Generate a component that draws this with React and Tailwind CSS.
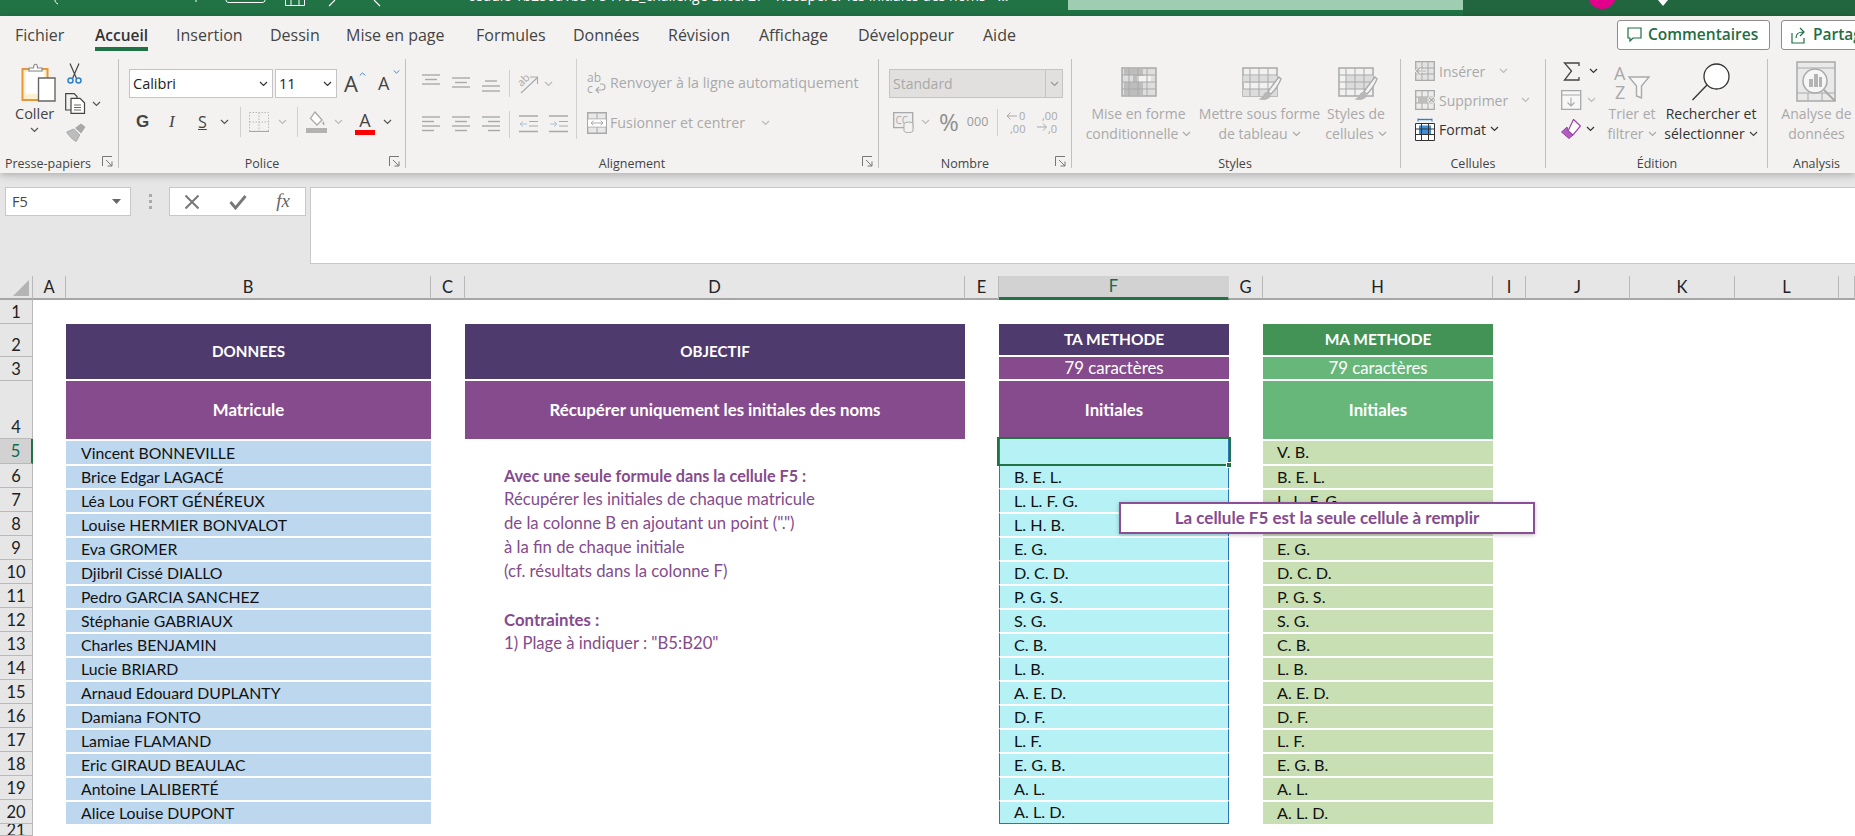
import React from 'react';

const TABS = [
  ['Fichier', 80], ['Accueil', 81], ['Insertion', 94], ['Dessin', 76], ['Mise en page', 130], ['Formules', 97],
  ['Données', 95], ['Révision', 91], ['Affichage', 99], ['Développeur', 125], ['Aide', 60],
];

const ROWS = [
  ['Vincent BONNEVILLE', '', 'V. B.', ''],
  ['Brice Edgar LAGACÉ', 'B. E. L.', 'B. E. L.', 'h'],
  ['Léa Lou FORT GÉNÉREUX', 'L. L. F. G.', 'L. L. F. G.', 'Récupérer les initiales de chaque matricule'],
  ['Louise HERMIER BONVALOT', 'L. H. B.', 'L. H. B.', 'de la colonne B en ajoutant un point (".")'],
  ['Eva GROMER', 'E. G.', 'E. G.', 'à la fin de chaque initiale'],
  ['Djibril Cissé DIALLO', 'D. C. D.', 'D. C. D.', '(cf. résultats dans la colonne F)'],
  ['Pedro GARCIA SANCHEZ', 'P. G. S.', 'P. G. S.', ''],
  ['Stéphanie GABRIAUX', 'S. G.', 'S. G.', 'c'],
  ['Charles BENJAMIN', 'C. B.', 'C. B.', '1) Plage à indiquer : "B5:B20"'],
  ['Lucie BRIARD', 'L. B.', 'L. B.', ''],
  ['Arnaud Edouard DUPLANTY', 'A. E. D.', 'A. E. D.', ''],
  ['Damiana FONTO', 'D. F.', 'D. F.', ''],
  ['Lamiae FLAMAND', 'L. F.', 'L. F.', ''],
  ['Eric GIRAUD BEAULAC', 'E. G. B.', 'E. G. B.', ''],
  ['Antoine LALIBERTÉ', 'A. L.', 'A. L.', ''],
  ['Alice Louise DUPONT', 'A. L. D.', 'A. L. D.', ''],
];

const COLS = [
  ['A', 'w'], ['B', 'w'], ['C', 'w'], ['D', 'w'], ['E', 'w'], ['F', 's'], ['G', 'w'], ['H', 'w'], ['I', 'w'], ['J', 'w'], ['K', 'w'], ['L', 'w'], ['', 'w'],
];

const GRAY = '#a9a9a9';

function Chev({ color = '#555', className = '' }) {
  return (
    <svg width="9" height="6" viewBox="0 0 9 6" className={className}>
      <path d="M1 1l3.5 3.5L8 1" fill="none" stroke={color} strokeWidth="1.2" />
    </svg>
  );
}

function Launcher() {
  return (
    <svg width="11" height="11" viewBox="0 0 11 11" className="absolute right-[5px] top-[1px]">
      <path d="M.5 10V.5H10M4 4l6 6M10 5.5V10H5.5" fill="none" stroke="#777" strokeWidth="1" />
    </svg>
  );
}

function Group({ w, label, launcher, children }) {
  return (
    <div className={`${w} h-[109px] shrink-0 flex flex-col border-r border-[#c2c0be]`}>
      <div className="h-[96px] flex">{children}</div>
      <div className="relative h-[13px] text-center text-[12.5px] leading-[18px] text-[#444]">
        {label}
        {launcher && <Launcher />}
      </div>
    </div>
  );
}

function Lines({ w = 18, h = 12, lines, color = GRAY }) {
  return (
    <svg width={w} height={h} viewBox={`0 0 ${w} ${h}`} className="shrink-0">
      {lines.map(([a, b, y], i) => <path key={i} d={`M${a} ${y}H${b}`} stroke={color} strokeWidth="1.4" />)}
    </svg>
  );
}

function PasteIcon() {
  return (
    <svg width="35" height="39" viewBox="0 0 35 39">
      <path d="M1.5 6h25v31h-25z" fill="#fdf0cf" stroke="#e79739" strokeWidth="2" />
      <path d="M5 9h18v22H5z" fill="#fff" />
      <path d="M8 8V5h4.5c0-5 4-5 4 0H21v3z" fill="#fff" stroke="#8a8a8a" strokeWidth="1.2" />
      <path d="M17.5 15h16.5v23H17.5z" fill="#fff" stroke="#666" strokeWidth="1.4" />
    </svg>
  );
}

function ScissorsIcon() {
  return (
    <svg width="15" height="21" viewBox="0 0 15 21">
      <path d="M3 .5l6.500 15M12 .5L5.500 15.500" stroke="#444" strokeWidth="1.2" fill="none" />
      <circle cx="3.5" cy="17.5" r="2.5" fill="none" stroke="#2f80c8" strokeWidth="1.5" />
      <circle cx="11.5" cy="17.5" r="2.5" fill="none" stroke="#2f80c8" strokeWidth="1.5" />
    </svg>
  );
}

function CopyIcon() {
  return (
    <svg width="21" height="21" viewBox="0 0 21 21">
      <path d="M6 17H.7V.7h8.5L12 3.5v1.8" fill="none" stroke="#444" strokeWidth="1.2" />
      <path d="M6 5.3h9l4.500 4.500v10.500H6z" fill="#fff" stroke="#444" strokeWidth="1.2" />
      <path d="M9 12h7M9 14.5h7M9 17h7" stroke="#666" strokeWidth="1" />
    </svg>
  );
}

function BrushIcon() {
  return (
    <svg width="21" height="19" viewBox="0 0 21 19">
      <path d="M.7 9l7-3 6 6-3.500 6.500C7 17 3 13 .7 9z" fill="#bdbdbd" stroke="#a8a8a8" />
      <path d="M9 5l6-4.500 4.500 3.500-4.500 6.500z" fill="#a8a8a8" />
    </svg>
  );
}

function BordersIcon() {
  return (
    <svg width="20" height="20" viewBox="0 0 20 20">
      <path d="M.5 .5h19v19H.5z" fill="none" stroke="#bbb" strokeDasharray="1.5 1.5" />
      <path d="M.5 10h19M10 .5v19" stroke="#bbb" strokeDasharray="1.5 1.5" />
      <path d="M0 19.5h20" stroke="#a8a8a8" strokeWidth="1.2" />
    </svg>
  );
}

function FillIcon() {
  return (
    <svg width="21" height="22" viewBox="0 0 21 22">
      <path d="M9 1l7 8-5 5-6.500-6.500z" fill="#fff" stroke="#a8a8a8" strokeWidth="1.3" />
      <path d="M17 10c1.500 2 2 3 1 4-1.200.6-2-1.500-1-4z" fill="#a8a8a8" />
      <path d="M0 17h21v5H0z" fill="#b4b2b0" />
    </svg>
  );
}

function WrapIcon() {
  return (
    <svg width="20" height="22" viewBox="0 0 20 22" className="shrink-0">
      <text x="0" y="10" fontSize="12" fill={GRAY} fontFamily="Open Sans, sans-serif">ab</text>
      <text x="0" y="21" fontSize="12" fill={GRAY} fontFamily="Open Sans, sans-serif">c</text>
      <path d="M9 18h6c4 0 4-6 0-6h-2M12 15l-3 3 3 3" fill="none" stroke={GRAY} strokeWidth="1.1" />
    </svg>
  );
}

function RotateIcon() {
  return (
    <svg width="21" height="21" viewBox="0 0 21 21">
      <g transform="rotate(-45 7 8)">
        <text x="0" y="10" fontSize="11" fill={GRAY} fontFamily="Open Sans, sans-serif">ab</text>
      </g>
      <path d="M3 20L19 5M12 4h7.500v7" fill="none" stroke={GRAY} strokeWidth="1.1" />
    </svg>
  );
}

function IndentIcon({ dir }) {
  return (
    <svg width="19" height="18" viewBox="0 0 19 18">
      <path d="M0 1h19M0 16.5h19" stroke={GRAY} strokeWidth="1.4" />
      <path d="M10 6.5h9M10 11h9" stroke={GRAY} strokeWidth="1.2" />
      {dir === 'l'
        ? <path d="M8 9H1M4 6.500L1 9l3 2.500" fill="none" stroke="#a8c4d8" strokeWidth="1" />
        : <path d="M1 9h7M5 6.500L8 9l-3 2.500" fill="none" stroke="#a8c4d8" strokeWidth="1" />}
    </svg>
  );
}

function MergeIcon() {
  return (
    <svg width="20" height="22" viewBox="0 0 20 22" className="shrink-0">
      <path d="M.7 .7h18.600v20.600H.7z" fill="#e8e8e8" stroke={GRAY} strokeWidth="1.4" />
      <path d="M1 7h18M1 15h18M10 1v6M10 15v6" stroke={GRAY} />
      <path d="M1 7.5h18v7H1z" fill="#fff" />
      <path d="M4 11h12M6.500 8.800L4 11l2.500 2.200M13.500 8.800L16 11l-2.500 2.200" fill="none" stroke={GRAY} />
    </svg>
  );
}

function AccountingIcon() {
  return (
    <svg width="21" height="21" viewBox="0 0 21 21">
      <path d="M.7 .7h19v15h-19z" fill="#eee" stroke={GRAY} strokeWidth="1.3" />
      <text x="2.5" y="12" fontSize="10" fill={GRAY} fontFamily="Open Sans, sans-serif">CC</text>
      <ellipse cx="15.5" cy="12" rx="4.5" ry="2" fill="#f3f2f1" stroke={GRAY} />
      <path d="M11 12v7c0 2 9 2 9 0v-7" fill="#f3f2f1" stroke={GRAY} />
    </svg>
  );
}

function DecimalIcon({ flip }) {
  const top = flip ? ',00' : '0';
  const bottom = flip ? ',0' : ',00';
  return (
    <svg width="21" height="25" viewBox="0 0 21 25" className="font-['Open_Sans',sans-serif]">
      <text x={flip ? 5 : 13} y="10" fontSize="11" fill={GRAY}>{top}</text>
      <text x={flip ? 11 : 4} y="23" fontSize="11" fill={GRAY}>{bottom}</text>
      {flip
        ? <path d="M0 17h9M6 13.500L9.500 17 6 20.500" fill="none" stroke={GRAY} />
        : <path d="M11 6H1M4.500 2.500L1 6l3.500 3.500" fill="none" stroke={GRAY} />}
    </svg>
  );
}

function TableIcon({ kind }) {
  return (
    <svg width="44" height="36" viewBox="0 0 44 36">
      <path d="M1 1h34v28H1z" fill={kind === 'cond' ? '#dedede' : '#f1f1f1'} stroke={GRAY} strokeWidth="1.5" />
      {kind === 'cond' && <path d="M3 2h19v6H3zM3 15h19v13H3zM12 8h11v7H12z" fill="#bdbdbd" />}
      {kind === 'cond' && <path d="M16 9h14v6H16z" fill="#f3f2f1" />}
      {kind === 'table' && <path d="M1 9h34v7H1zM1 22h34v7H1z" fill="#dcdcdc" />}
      {kind === 'style' && <path d="M8 8h27v14H8z" fill="#dcdcdc" />}
      <path d="M1 8h34M1 15h34M1 22h34M8 1v28M17 1v28M26 1v28" stroke={GRAY} strokeWidth="1" fill="none" />
      {kind !== 'cond' && <path d="M37 10c-4 5-8 10-11 15l3 2c4-4 8-10 10-15z" fill="#f3f2f1" stroke={GRAY} strokeWidth="1.3" />}
      {kind !== 'cond' && <path d="M25 25c-4 0-3 6-9 7 5 2 12 1 13-4z" fill="#b7b7b7" />}
    </svg>
  );
}

function InsertIcon() {
  return (
    <svg width="20" height="20" viewBox="0 0 20 20" className="shrink-0">
      <path d="M.7 .7h18.600v18.600H.7z" fill="#e3e3e3" stroke={GRAY} strokeWidth="1.3" />
      <path d="M1 7h18M1 13h18M7 1v18M13 1v18" stroke={GRAY} />
      <path d="M2 10h9M5 6.500L1.500 10 5 13.500" fill="none" stroke="#f3f2f1" strokeWidth="3" />
      <path d="M2 10h9M5 6.500L1.500 10 5 13.500" fill="none" stroke={GRAY} strokeWidth="1.1" />
    </svg>
  );
}

function DeleteIcon() {
  return (
    <svg width="21" height="20" viewBox="0 0 21 20" className="shrink-0">
      <path d="M.7 .7h18.600v18.600H.7z" fill="#ececec" stroke={GRAY} strokeWidth="1.3" />
      <path d="M1 7h18M1 13h18M7 1v18M13 1v18" stroke={GRAY} />
      <path d="M3 7h9v6H3z" fill="#bdbdbd" />
      <path d="M13.500 7l6 6M19.500 7l-6 6" stroke="#f3f2f1" strokeWidth="3" />
      <path d="M14 7.500l5 5M19 7.500l-5 5" stroke={GRAY} strokeWidth="1.2" />
    </svg>
  );
}

function FormatIcon() {
  return (
    <svg width="20" height="23" viewBox="0 0 20 23" className="shrink-0">
      <path d="M.5 5.5h19v17H.5z" fill="#fff" stroke="#333" />
      <path d="M4 7.5h12V16H4z" fill="#3d8fd8" />
      <path d="M.5 11h19M.5 16.5h19M6.5 5.5v17M13.5 5.5v17" stroke="#333" />
      <path d="M3 1.5h14" stroke="#2f80c8" strokeWidth="1.4" />
      <path d="M3 .5v3M17 .5v3" stroke="#2f80c8" />
    </svg>
  );
}

function SigmaIcon() {
  return (
    <svg width="17" height="19" viewBox="0 0 17 19">
      <path d="M16 4V1H1.500l7 8-7 9H16v-3" fill="none" stroke="#444" strokeWidth="1.3" />
    </svg>
  );
}

function FillDownIcon() {
  return (
    <svg width="21" height="20" viewBox="0 0 21 20">
      <path d="M.7 .7h19v18.600h-19z" fill="#f7f7f7" stroke={GRAY} strokeWidth="1.3" />
      <path d="M1 5h19" stroke={GRAY} />
      <path d="M10 7.500v8M6.500 12.500L10 16l3.500-3.500" fill="none" stroke={GRAY} strokeWidth="1.1" />
    </svg>
  );
}

function EraserIcon() {
  return (
    <svg width="20" height="20" viewBox="0 0 20 20">
      <path d="M12.500 .5L19.500 7l-7.500 9-5-4z" fill="#fff" stroke="#9b3fa8" strokeWidth="1.2" />
      <path d="M7 12l5 4-4 3.500L.5 13 6 8z" fill="#b05cc0" stroke="#9b3fa8" />
    </svg>
  );
}

function SortIcon() {
  return (
    <svg width="37" height="36" viewBox="0 0 37 36">
      <text x="0" y="15" fontSize="18" fill={GRAY} fontFamily="Open Sans, sans-serif">A</text>
      <text x="1" y="34" fontSize="18" fill={GRAY} fontFamily="Open Sans, sans-serif">Z</text>
      <path d="M15 12h20l-7.500 9v12l-5-2V21z" fill="#f7f7f7" stroke={GRAY} strokeWidth="1.4" />
    </svg>
  );
}

function SearchIcon() {
  return (
    <svg width="40" height="38" viewBox="0 0 40 38">
      <circle cx="25.5" cy="13.5" r="12.5" fill="#fff" stroke="#333" strokeWidth="1.3" />
      <path d="M16 22L1.500 37" stroke="#333" strokeWidth="1.3" />
    </svg>
  );
}

function AnalyseIcon() {
  return (
    <svg width="41" height="41" viewBox="0 0 41 41">
      <path d="M1 1h38v39H1z" fill="#e9e9e9" stroke={GRAY} strokeWidth="1.5" />
      <path d="M1 7h38M1 32h38M12 32v8M26 32v8" stroke={GRAY} />
      <circle cx="19" cy="20" r="12" fill="#f6f6f6" stroke={GRAY} strokeWidth="1.5" />
      <path d="M13 18h4v8h-4zM18 13h4v13h-4zM23 16h3v10h-3z" fill="#b3b3b3" />
      <path d="M28 29l11 11" stroke={GRAY} strokeWidth="1.8" />
    </svg>
  );
}

function TitleMarks() {
  return (
    <svg width="400" height="16" viewBox="0 0 400 16" className="shrink-0">
      <path d="M55 0c0 2 1 3 3 4M196 0v2" stroke="#fff" fill="none" />
      <path d="M226 0c0 1.500 1 2.500 3 2.500h33c2 0 3-1 3-2.500" stroke="#fff" fill="none" />
      <path d="M285.500 0v5.500h19V0M291 0v5M299 0v5" stroke="#fff" fill="none" />
      <path d="M335 0l-6 6M374 0l6 6" stroke="#fff" fill="none" strokeWidth="1.2" />
    </svg>
  );
}

function Big({ w, icon, lines, gray = true, chev }) {
  return (
    <div className={`${w} shrink-0 flex flex-col items-center`}>
      {icon}
      <div className={`text-center text-[14px] leading-[20px] whitespace-nowrap ${gray ? 'text-[#a9a9a9]' : 'text-[#333]'}`}>
        <div>{lines[0]}</div>
        <div className="flex items-center justify-center gap-[4px]">
          {lines[1]}
          {chev && <Chev color={gray ? GRAY : '#444'} />}
        </div>
      </div>
    </div>
  );
}

function Ribbon() {
  return (
    <div className="relative z-10 h-[157px] shrink-0 bg-[#f3f2f1] shadow-[0_2px_8px_rgba(0,0,0,0.25)]">
      {/* tabs */}
      <div className="h-[40px] flex items-start pl-[15px] pt-[8px] text-[16px] text-[#444]">
        {TABS.map(([t, w]) => (
          <div key={t} style={{ width: w }} className="shrink-0 leading-[22px]">
            <span className={t === 'Accueil' ? 'inline-block text-[15.5px] font-semibold text-[#333] border-b-[4px] border-[#1f7244] pb-[1px]' : ''}>{t}</span>
          </div>
        ))}
        <div className="ml-auto -mt-[4px] flex gap-[11px] -mr-[40px] text-[15.5px]">
          <div className="w-[153px] h-[30px] bg-white border border-[#8d8d8d] rounded-[3px] flex items-center gap-[6px] pl-[9px] text-[#1f6e43] font-semibold">
            <svg width="15" height="16" viewBox="0 0 15 16"><path d="M1 1h13v10H6l-3 3v-3H1z" fill="none" stroke="#1f6e43" strokeWidth="1.2" /></svg>
            Commentaires
          </div>
          <div className="w-[114px] h-[30px] bg-white border border-[#8d8d8d] rounded-[3px] flex items-center gap-[6px] pl-[9px] text-[#1f6e43] font-semibold overflow-hidden">
            <svg width="16" height="17" viewBox="0 0 16 17"><path d="M1 6v10h12v-5M5 11c0-4 3-6 7-6M9 1l4 4-4 4" fill="none" stroke="#1f6e43" strokeWidth="1.2" /></svg>
            Partager
          </div>
        </div>
      </div>

      {/* groups */}
      <div className="flex pt-[3px]">
        <Group w="w-[119px]" label={<span className="block pr-[22px]">Presse-papiers</span>} launcher>
          <div className="pl-[21px] pt-[4px] w-[65px] flex flex-col items-start">
            <PasteIcon />
            <div className="text-[14.5px] text-[#444] leading-[20px] mt-[2px] -ml-[6px]">Coller</div>
            <Chev className="mt-[3px] ml-[9px]" />
          </div>
          <div className="pt-[4px] flex flex-col items-start">
            <div className="ml-[2px]"><ScissorsIcon /></div>
            <div className="flex items-center gap-[6px] mt-[9px]"><CopyIcon /><Chev /></div>
            <div className="mt-[9px] ml-[1px]"><BrushIcon /></div>
          </div>
        </Group>

        <Group w="w-[287px]" label="Police" launcher>
          <div className="pl-[10px] pt-[10px]">
            <div className="flex items-center text-[14.5px] text-[#222]">
              <div className="w-[144px] h-[29px] bg-white border border-[#c4c4c4] flex items-center justify-between px-[3px] pr-[4px]">Calibri<Chev color="#333" /></div>
              <div className="ml-[2px] w-[62px] h-[29px] bg-white border border-[#c4c4c4] flex items-center justify-between px-[3px] pr-[4px]">11<Chev color="#333" /></div>
              <div className="ml-[7px] w-[20px] text-[22px] leading-[29px] text-[#444] relative">A<span className="absolute -right-[2px] top-[2px]"><Chev color="#2f80c8" className="rotate-180 w-[7px]" /></span></div>
              <div className="ml-[14px] w-[20px] text-[18px] leading-[29px] text-[#444] relative">A<span className="absolute -right-[2px] top-[0px]"><Chev color="#2f80c8" className="w-[7px]" /></span></div>
            </div>
            <div className="flex items-center h-[30px] mt-[9px] text-[#444]">
              <span className="ml-[7px] w-[12px] text-[17px] font-extrabold font-['Liberation_Sans',sans-serif]">G</span>
              <span className="ml-[21px] w-[10px] text-[17px] italic font-['Liberation_Serif',serif]">I</span>
              <span className="ml-[19px] w-[10px] text-[16px] underline">S</span>
              <Chev className="ml-[12px]" />
              <div className="ml-[11px] w-px h-[30px] bg-[#d2d0ce]" />
              <div className="ml-[8px]"><BordersIcon /></div>
              <Chev color="#bbb" className="ml-[9px]" />
              <div className="ml-[10px] w-px h-[30px] bg-[#d2d0ce]" />
              <div className="ml-[8px]"><FillIcon /></div>
              <Chev color="#bbb" className="ml-[7px]" />
              <div className="ml-[12px] w-[20px] flex flex-col items-center">
                <span className="text-[18px] leading-[20px] text-[#444]">A</span>
                <div className="w-[20px] h-[5px] bg-[#ff0000]" />
              </div>
              <Chev className="ml-[8px]" />
            </div>
          </div>
        </Group>

        <Group w="w-[473px]" label={<span className="block pr-[20px]">Alignement</span>} launcher>
          <div className="pl-[16px] pt-[10px] w-[171px] border-r border-[#d2d0ce] h-[80px]">
            <div className="flex items-center h-[29px]">
              <div className="-mt-[8px]"><Lines lines={[[0, 18, 1], [3, 15, 5.5], [0, 18, 10]]} /></div>
              <div className="ml-[12px] -mt-[2px]"><Lines lines={[[0, 18, 1], [3, 15, 5.5], [0, 18, 10]]} /></div>
              <div className="ml-[12px] mt-[5px]"><Lines lines={[[3, 15, 1], [0, 18, 6], [0, 18, 11]]} /></div>
              <div className="ml-[9px] w-px h-[27px] bg-[#d2d0ce]" />
              <div className="ml-[8px]"><RotateIcon /></div>
              <Chev color="#bbb" className="ml-[5px]" />
            </div>
            <div className="flex items-center h-[28px] mt-[12px]">
              <Lines h={16} lines={[[0, 18, 1], [0, 12, 5.5], [0, 18, 10], [0, 12, 14.5]]} />
              <div className="ml-[12px]"><Lines h={16} lines={[[0, 18, 1], [3, 15, 5.5], [0, 18, 10], [3, 15, 14.5]]} /></div>
              <div className="ml-[12px]"><Lines h={16} lines={[[0, 18, 1], [6, 18, 5.5], [0, 18, 10], [6, 18, 14.5]]} /></div>
              <div className="ml-[9px] w-px h-[27px] bg-[#d2d0ce]" />
              <div className="ml-[9px]"><IndentIcon dir="l" /></div>
              <div className="ml-[11px]"><IndentIcon dir="r" /></div>
            </div>
          </div>
          <div className="pl-[10px] pt-[12px] text-[14.25px] text-[#a9a9a9] whitespace-nowrap">
            <div className="flex items-center h-[24px] gap-[3px]"><WrapIcon />Renvoyer à la ligne automatiquement</div>
            <div className="flex items-center h-[24px] gap-[3px] mt-[16px]"><MergeIcon />Fusionner et centrer<Chev color="#bbb" className="ml-[13px]" /></div>
          </div>
        </Group>

        <Group w="w-[193px]" label={<span className="block pr-[20px]">Nombre</span>} launcher>
          <div className="pl-[10px] pt-[10px]">
            <div className="w-[174px] h-[29px] bg-[#e1e0de] border border-[#c4c4c4] flex items-center text-[14px] text-[#a9a9a9] pl-[3px]">
              <span className="flex-1">Standard</span>
              <div className="w-[17px] h-full border-l border-[#c4c4c4] flex items-center justify-center"><Chev color="#999" /></div>
            </div>
            <div className="flex items-center h-[30px] mt-[9px]">
              <div className="ml-[4px]"><AccountingIcon /></div>
              <Chev color="#bbb" className="ml-[7px]" />
              <span className="ml-[9px] text-[24px] leading-[30px] text-[#8f8f8f]">%</span>
              <span className="ml-[8px] text-[12.5px] text-[#9a9a9a]">000</span>
              <div className="ml-[9px] w-px h-[27px] bg-[#d2d0ce]" />
              <div className="ml-[8px]"><DecimalIcon /></div>
              <div className="ml-[10px]"><DecimalIcon flip /></div>
            </div>
          </div>
        </Group>

        <Group w="w-[329px]" label={<span className="block pr-[2px]">Styles</span>}>
          <div className="flex pl-[7px] pt-[8px]">
            <Big w="w-[119px]" icon={<div className="h-[37px] pl-[8px]"><TableIcon kind="cond" /></div>} lines={['Mise en forme', 'conditionnelle']} chev />
            <Big w="w-[123px]" icon={<div className="h-[37px] pl-[8px]"><TableIcon kind="table" /></div>} lines={['Mettre sous forme', 'de tableau']} chev />
            <Big w="w-[70px]" icon={<div className="h-[37px] pl-[8px]"><TableIcon kind="style" /></div>} lines={['Styles de', 'cellules']} chev />
          </div>
        </Group>

        <Group w="w-[145px]" label="Cellules">
          <div className="pl-[14px] flex flex-col gap-[5px] text-[14px] whitespace-nowrap">
            <div className="h-[24px] flex items-center text-[#a9a9a9]"><InsertIcon /><span className="ml-[4px]">Insérer</span><Chev color="#bbb" className="ml-[14px]" /></div>
            <div className="h-[24px] flex items-center text-[#a9a9a9]"><DeleteIcon /><span className="ml-[3px]">Supprimer</span><Chev color="#bbb" className="ml-[13px]" /></div>
            <div className="h-[24px] flex items-center text-[#333]"><FormatIcon /><span className="ml-[4px]">Format</span><Chev color="#333" className="ml-[4px]" /></div>
          </div>
        </Group>

        <Group w="w-[222px]" label={<span className="block pl-[1px]">Édition</span>}>
          <div className="w-[58px] shrink-0 pl-[15px] flex flex-col gap-[5px]">
            <div className="h-[24px] flex items-center gap-[9px] pl-[2px]"><SigmaIcon /><Chev color="#333" /></div>
            <div className="h-[24px] flex items-center gap-[5px]"><FillDownIcon /><Chev color="#bbb" /></div>
            <div className="h-[24px] flex items-center gap-[5px]"><EraserIcon /><Chev color="#333" /></div>
          </div>
          <Big w="w-[56px]" icon={<div className="h-[45px] pt-[6px]"><SortIcon /></div>} lines={['Trier et', 'filtrer']} chev />
          <Big w="w-[102px]" gray={false} icon={<div className="h-[45px] pt-[4px]"><SearchIcon /></div>} lines={['Rechercher et', 'sélectionner']} chev />
        </Group>

        <div className="w-[97px] shrink-0 flex flex-col h-[109px]">
          <div className="h-[96px] flex">
            <Big w="w-[97px]" icon={<div className="h-[45px] pt-[2px]"><AnalyseIcon /></div>} lines={['Analyse de', 'données']} />
          </div>
          <div className="h-[13px] text-center text-[12.5px] leading-[18px] text-[#444]">Analysis</div>
        </div>
      </div>
    </div>
  );
}

function FormulaBar() {
  return (
    <div className="h-[103px] shrink-0 bg-[#e6e6e6] flex items-start pl-[5px] pt-[14px] text-[#444]">
      <div className="w-[126px] h-[29px] bg-white border border-[#c8c8c8] flex items-center justify-between pl-[6px] pr-[9px] text-[14.5px]">
        F5
        <svg width="9" height="5" viewBox="0 0 9 5"><path d="M0 0h9L4.500 5z" fill="#666" /></svg>
      </div>
      <div className="w-[38px] h-[29px] flex flex-col items-center justify-center gap-[3px]">
        <span className="w-[3px] h-[3px] bg-[#aaa]" />
        <span className="w-[3px] h-[3px] bg-[#aaa]" />
        <span className="w-[3px] h-[3px] bg-[#aaa]" />
      </div>
      <div className="w-[137px] h-[29px] bg-white border border-[#c8c8c8] flex items-center justify-between pl-[14px] pr-[15px]">
        <svg width="16" height="16" viewBox="0 0 16 16"><path d="M1.500 1.500l13 13M14.500 1.500l-13 13" stroke="#777" strokeWidth="2" /></svg>
        <svg width="18" height="16" viewBox="0 0 18 16"><path d="M1.500 8l5 6L16.500 2" fill="none" stroke="#777" strokeWidth="2.8" /></svg>
        <span className="text-[19px] italic font-['Liberation_Serif',serif] text-[#666]">fx</span>
      </div>
      <div className="ml-[4px] flex-1 h-[77px] bg-white border border-[#c8c8c8] border-r-0" />
    </div>
  );
}

function RowNum({ n, active, bottom }) {
  return (
    <div className={`col-start-1 flex justify-center text-[16.5px] leading-[22px] overflow-hidden border-b border-[#b9b9b9] ${bottom ? 'items-end' : 'items-center'} ${active ? 'bg-[#d2d2d2] text-[#0f6b4f] border-r-2 border-r-[#217346]' : 'bg-[#e6e6e6] text-[#222] border-r border-r-[#b9b9b9]'}`}>
      {n}
    </div>
  );
}

function HeaderCell({ className, children }) {
  return <div className={`flex items-center justify-center text-white border-b-2 border-white ${className}`}>{children}</div>;
}

function Sheet() {
  return (
    <div className="relative flex-1 min-h-0 bg-white font-['Lato',sans-serif] text-[15.8px] text-[#111] grid grid-cols-[33px_33px_365px_34px_500px_34px_230px_34px_230px_33px_104px_105px_104px_1fr] grid-rows-[24px_24px_33px_24px_58px_25px_repeat(15,24px)_12px]">
      {/* column letters */}
      <div className="bg-[#e6e6e6] border-b-2 border-[#a6a6a6] border-r border-r-[#b9b9b9] flex items-end justify-end pb-[2px] pr-[3px]">
        <div className="w-0 h-0 border-l-[16px] border-l-transparent border-b-[16px] border-b-[#b4b4b4]" />
      </div>
      {COLS.map(([c, k]) => (
        <div key={c || 'x'} className={`flex items-center justify-center text-[16.5px] border-r ${k === 's' ? 'bg-[#d2d2d2] text-[#0f6b4f] border-b-[3px] border-b-[#217346] border-r-[#d2d2d2]' : 'bg-[#e6e6e6] text-[#222] border-b-2 border-b-[#a6a6a6] border-r-[#b9b9b9]'}`}>
          {c}
        </div>
      ))}

      <RowNum n={1} />

      <RowNum n={2} bottom />
      <HeaderCell className="col-start-3 row-span-2 bg-[#4e3a6d] font-bold text-[15.2px]">DONNEES</HeaderCell>
      <HeaderCell className="col-start-5 row-span-2 bg-[#4e3a6d] font-bold text-[15.2px]">OBJECTIF</HeaderCell>
      <HeaderCell className="col-start-7 bg-[#4e3a6d] font-bold text-[15.5px]">TA METHODE</HeaderCell>
      <HeaderCell className="col-start-9 bg-[#449356] font-bold text-[15.5px]">MA METHODE</HeaderCell>

      <RowNum n={3} />
      <HeaderCell className="col-start-7 bg-[#854b8d] text-[16.8px]">79 caractères</HeaderCell>
      <HeaderCell className="col-start-9 bg-[#68b77a] text-[16.8px]">79 caractères</HeaderCell>

      <RowNum n={4} bottom />
      <HeaderCell className="col-start-3 bg-[#854b8d] !border-b-0 font-bold text-[16.8px]">Matricule</HeaderCell>
      <HeaderCell className="col-start-5 bg-[#854b8d] !border-b-0 font-bold text-[16.8px]">Récupérer uniquement les initiales des noms</HeaderCell>
      <HeaderCell className="col-start-7 bg-[#854b8d] !border-b-0 font-bold text-[16.8px]">Initiales</HeaderCell>
      <HeaderCell className="col-start-9 bg-[#68b77a] !border-b-0 font-bold text-[16.8px]">Initiales</HeaderCell>

      {ROWS.map(([name, ini, mine, note], i) => (
        <React.Fragment key={name}>
          <RowNum n={i + 5} active={i === 0} />
          <div className="col-start-3 bg-[#bdd7ee] border-t-2 border-white pl-[15px] flex items-center whitespace-nowrap">{name}</div>
          <div className={`col-start-5 pl-[39px] flex items-center whitespace-nowrap text-[#854b8d] ${note === 'h' ? 'font-bold text-[16.2px]' : note === 'c' ? 'font-bold text-[16.8px]' : 'text-[16.7px]'}`}>
            {note === 'h' ? 'Avec une seule formule dans la cellule F5 :' : note === 'c' ? 'Contraintes :' : note}
          </div>
          <div className={`col-start-7 bg-[#b6f1f5] border-x border-[#2e75b6] pl-[14px] flex items-center text-[16.2px] ${i === 0 ? 'relative z-10 outline-2 outline-[#217346]' : 'border-t-2 border-t-white'} ${i === 15 ? 'border-b border-b-[#2e75b6]' : ''}`}>
            {ini}
            {i === 0 && <span className="absolute -right-[4px] -bottom-[4px] w-[6px] h-[6px] bg-[#217346] border border-white" />}
          </div>
          <div className="col-start-9 bg-[#c8dfb3] border-t-2 border-white pl-[14px] flex items-center text-[16.2px]">{mine}</div>
        </React.Fragment>
      ))}

      <RowNum n={21} />

      {/* text box lying over the sheet */}
      <div className="absolute left-[1119px] top-[226px] w-[416px] h-[32px] z-20 bg-white border-2 border-[#8a4f97] shadow-[0_1px_4px_rgba(0,0,0,0.25)] flex items-center justify-center font-bold text-[17px] text-[#854b8d]">
        La cellule F5 est la seule cellule à remplir
      </div>
    </div>
  );
}

export default function App() {
  return (
    <div className="w-[1855px] h-[836px] overflow-hidden flex flex-col font-['Open_Sans',sans-serif]">
      {/* title bar, cut off by the top of the capture */}
      <div className="relative h-[16px] shrink-0 bg-[#217346] overflow-hidden flex">
        <TitleMarks />
        <div className="ml-[68px] w-[600px] -mt-[13px] text-[14px] leading-[18px] text-white whitespace-nowrap">cedule 1b250a1b54 54102_challenge Excel 27 - Récupérer les initiales des noms - ...</div>
        <div className="w-[395px] h-[10px] bg-[#9fcdb2]" />
        <div className="flex-1 bg-[#22663f] flex">
          <div className="ml-[125px] -mt-[19px] w-[28px] h-[28px] rounded-full bg-[#e3008c]" />
          <svg width="60" height="10" viewBox="0 0 60 10" className="ml-[42px]"><path d="M0 0h10L5 6z" fill="#fff" /></svg>
        </div>
      </div>
      <Ribbon />
      <FormulaBar />
      <Sheet />
    </div>
  );
}
